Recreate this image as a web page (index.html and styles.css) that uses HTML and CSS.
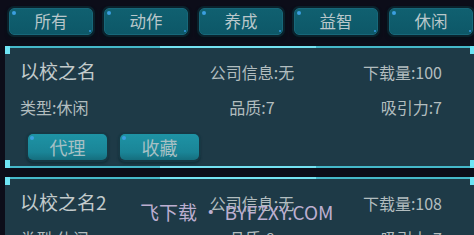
FILE: index.html
```html
<!DOCTYPE html>
<html>
<head>
<meta charset="utf-8">
<link rel="stylesheet" href="styles.css">
</head>
<body>
<div class="screen">
  <div class="tabs">
    <div class="tab">所有</div>
    <div class="tab">动作</div>
    <div class="tab">养成</div>
    <div class="tab">益智</div>
    <div class="tab">休闲</div>
  </div>
  <div class="list">
    <div class="card">
      <div class="row">
        <div class="title">以校之名</div>
        <div class="mid">公司信息:无</div>
        <div class="right">下载量:100</div>
      </div>
      <div class="row row2">
        <div class="info">类型:休闲</div>
        <div class="mid">品质:7</div>
        <div class="right">吸引力:7</div>
      </div>
      <div class="actions">
        <div class="btn">代理</div>
        <div class="btn">收藏</div>
      </div>
    </div>
    <div class="card">
      <div class="row">
        <div class="title">以校之名2</div>
        <div class="mid">公司信息:无</div>
        <div class="right">下载量:108</div>
      </div>
      <div class="row row2">
        <div class="info">类型:休闲</div>
        <div class="mid">品质:8</div>
        <div class="right">吸引力:7</div>
      </div>
      <div class="actions">
        <div class="btn">代理</div>
        <div class="btn">收藏</div>
      </div>
    </div>
  </div>
  <div class="watermark">飞下载 • BYFZXY.COM</div>
</div>
</body>
</html>
```
FILE: styles.css
```css
html, body {
  margin: 0;
  padding: 0;
  background: #0c0d19;
  overflow: hidden;
}
.screen {
  position: relative;
  width: 474px;
  height: 235px;
  overflow: hidden;
  font-family: "Noto Sans CJK SC", "Noto Sans", sans-serif;
}
.tabs {
  display: flex;
  gap: 11px;
  padding: 8px 0 0 9px;
  width: 600px;
}
.tab {
  position: relative;
  flex: 0 0 84px;
  height: 27px;
  box-sizing: border-box;
  border-radius: 5px;
  background: linear-gradient(#106070, #0d5868);
  border: 1px solid #17687a;
  box-shadow: 0 0 0 2px #0a222c, 0 2px 3px 2px #061018;
  color: #b9c7ca;
  font-size: 16.5px;
  line-height: 25px;
  text-align: center;
}
.tab::before {
  content: "";
  position: absolute;
  left: 2px;
  top: 2px;
  width: 4px;
  height: 4px;
  border-radius: 50%;
  background: #3b9fe0;
}
.tab::after {
  content: "";
  position: absolute;
  right: 1px;
  bottom: 2px;
  width: 2px;
  height: 2px;
  background: #2b86c4;
}
.list {
  display: flex;
  flex-direction: column;
  gap: 9px;
  margin: 11px 0 0 5px;
}
.card {
  width: 469px;
  height: 122px;
  box-sizing: border-box;
  padding: 10px 32px 0 15px;
  flex: none;
  background:
    linear-gradient(#6ee4f4, #6ee4f4) left top / 5px 8px no-repeat,
    linear-gradient(#6ee4f4, #6ee4f4) right top / 4px 8px no-repeat,
    linear-gradient(#6ee4f4, #6ee4f4) left bottom / 5px 8px no-repeat,
    linear-gradient(#6ee4f4, #6ee4f4) right bottom / 4px 8px no-repeat,
    linear-gradient(to right, #45b8ca 0 155px, #74e2f2 155px 311px, #45b8ca 311px) left top / 100% 2px no-repeat,
    linear-gradient(to right, #45b8ca 0 155px, #74e2f2 155px 311px, #45b8ca 311px) left bottom / 100% 2px no-repeat,
    #1e3a47;
}
.row {
  display: grid;
  grid-template-columns: 160px 144px 1fr;
  align-items: baseline;
  color: #b2bdbf;
  font-size: 16px;
  line-height: 24px;
}
.title {
  font-size: 19px;
  color: #c3cbcc;
  line-height: 30px;
}
.mid {
  text-align: center;
}
.right {
  text-align: right;
}
.row2 {
  margin-top: 9px;
}
.actions {
  display: flex;
  gap: 13px;
  margin: 15px 0 0 8px;
}
.btn {
  position: relative;
  width: 79px;
  height: 26px;
  box-sizing: border-box;
  border-radius: 5px;
  background: linear-gradient(#1e93a5, #1a8597 70%, #156e7e);
  box-shadow: 0 0 0 2px #183844, 0 2px 2px 2px #14303b;
  color: #a6c0c4;
  font-size: 18px;
  line-height: 26px;
  text-align: center;
}
.btn::before {
  content: "";
  position: absolute;
  left: 2px;
  top: 2px;
  width: 4px;
  height: 4px;
  border-radius: 50%;
  background: #3b9fe0;
}
.watermark {
  position: absolute;
  left: 140px;
  top: 198px;
  font-size: 19px;
  color: #bcaed0;
  white-space: nowrap;
}
```
